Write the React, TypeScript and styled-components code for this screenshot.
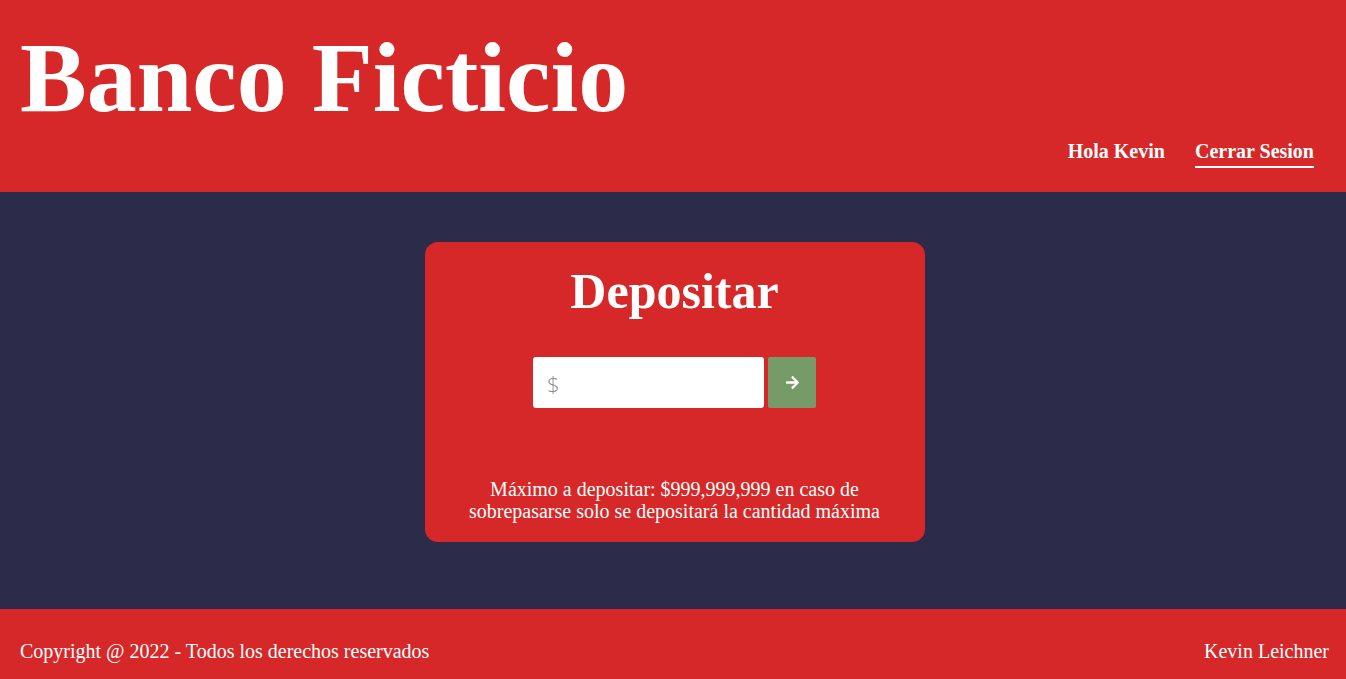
import React from 'react'
import styled, { createGlobalStyle } from 'styled-components'
import { FaArrowRight } from 'react-icons/fa'

const RED = '#d62828'
const NAVY = '#2c2c4a'

const GlobalStyle = createGlobalStyle`
  html, body {
    margin: 0;
    padding: 0;
  }
  body {
    font-family: "Liberation Serif", "Times New Roman", serif;
    background: ${NAVY};
    color: #fff;
  }
`

const App = (): JSX.Element => {
  return (
    <>
      <GlobalStyle />
      <StyledPage>
        <Header />
        <StyledMain>
          <DepositCard />
        </StyledMain>
        <Footer />
      </StyledPage>
    </>
  )
}

export default App

function Header(): JSX.Element {
  return (
    <StyledHeader>
      <h1>Banco Ficticio</h1>
      <nav>
        <NavItem>Hola Kevin</NavItem>
        <NavItem underline>Cerrar Sesion</NavItem>
      </nav>
    </StyledHeader>
  )
}

function DepositCard(): JSX.Element {
  return (
    <StyledCard>
      <h2>Depositar</h2>
      <form className='amount' onSubmit={e => e.preventDefault()}>
        <input type='text' placeholder='$' />
        <button type='submit'>
          <FaArrowRight />
        </button>
      </form>
      <p>
        Máximo a depositar: $999,999,999 en caso de sobrepasarse solo se
        depositará la cantidad máxima
      </p>
    </StyledCard>
  )
}

function Footer(): JSX.Element {
  return (
    <StyledFooter>
      <span>Copyright @ 2022 - Todos los derechos reservados</span>
      <span>Kevin Leichner</span>
    </StyledFooter>
  )
}

// Styling
const StyledPage = styled.div`
  min-height: 100vh;
  display: flex;
  flex-direction: column;
`

const StyledHeader = styled.header`
  box-sizing: border-box;
  height: 192px;
  background: ${RED};
  padding: 20px 32px 0 20px;

  h1 {
    margin: 0;
    font-size: 100px;
    font-weight: bold;
    line-height: 115px;
  }

  nav {
    margin-top: 5px;
    display: flex;
    justify-content: flex-end;
    gap: 30px;
  }
`

const NavItem = styled.a<{ underline?: boolean }>`
  font-size: 20px;
  font-weight: bold;
  line-height: 23px;
  padding-bottom: 3px;
  cursor: pointer;
  border-bottom: 2px solid ${({ underline }) => (underline ? '#fff' : 'transparent')};
`

const StyledMain = styled.main`
  flex: 1;
  display: flex;
  justify-content: center;
  align-items: center;
  padding: 50px 0 67px 3px;
`

const StyledCard = styled.section`
  box-sizing: border-box;
  width: 500px;
  height: 300px;
  background: ${RED};
  border-radius: 13px;
  padding: 21px 30px 20px;
  display: flex;
  flex-direction: column;
  align-items: center;

  h2 {
    margin: 0;
    font-size: 50px;
    font-weight: bold;
    line-height: 57px;
  }

  .amount {
    margin-top: 37px;
    display: flex;
    gap: 4px;
  }

  input {
    box-sizing: border-box;
    width: 231px;
    height: 51px;
    border: none;
    border-radius: 3px;
    padding: 0 14px;
    font-family: "Open Sans", sans-serif;
    font-size: 22px;
    font-weight: 300;
    outline: none;
    &::placeholder {
      color: #8c8c8c;
    }
  }

  button {
    width: 48px;
    height: 51px;
    border: none;
    border-radius: 2px;
    background: #779a69;
    color: #fff;
    font-size: 15px;
    display: flex;
    justify-content: center;
    align-items: center;
    cursor: pointer;
  }

  p {
    margin: auto 0 0;
    max-width: 440px;
    text-align: center;
    font-size: 20px;
    line-height: 22px;
  }
`

const StyledFooter = styled.footer`
  box-sizing: border-box;
  height: 70px;
  background: ${RED};
  padding: 31px 17px 0 20px;
  display: flex;
  justify-content: space-between;
  font-size: 20px;
  line-height: 22px;
`
